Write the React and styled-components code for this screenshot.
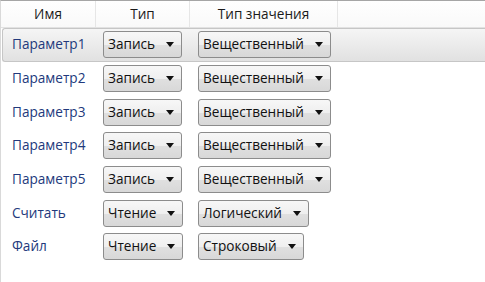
import React from 'react';
import styled, { createGlobalStyle } from 'styled-components';

const GlobalStyle = createGlobalStyle`
  html, body {
    margin: 0;
    padding: 0;
    background: #fff;
  }
  body {
    font-family: 'Open Sans', 'Liberation Sans', sans-serif;
    font-size: 13.6px;
  }
`;

const Grid = styled.div`
  box-sizing: border-box;
  width: 485px;
  height: 282px;
  border-top: 1px solid #a6a6a6;
  border-left: 1px solid #d9d9d9;
  background: #fff;
`;

const columns = '95px 94px 148px 1fr';

const HeaderRow = styled.div`
  display: grid;
  grid-template-columns: ${columns};
  height: 26px;
  border-bottom: 1px solid #e2e2e2;
  background: linear-gradient(#ffffff, #f9f9f9);
`;

const HeaderCell = styled.div`
  display: flex;
  align-items: center;
  justify-content: center;
  border-right: 1px solid #e6e6e6;
  color: #1a1a1a;
  padding-bottom: 2px;
`;

const Body = styled.div`
  display: flex;
  flex-direction: column;
`;

const Row = styled.div`
  box-sizing: border-box;
  display: grid;
  grid-template-columns: ${columns};
  align-items: center;
  height: 33.7px;
  margin-left: 1px;
  border: 1px solid ${(p) => (p.$selected ? '#c6c6c6' : 'transparent')};
  border-right: none;
  border-radius: 3px 0 0 3px;
  background: ${(p) =>
    p.$selected ? 'linear-gradient(#f5f5f5, #e1e1e1)' : 'transparent'};
`;

const Label = styled.div`
  padding-left: 9px;
  color: #22397c;
  padding-bottom: 2px;
`;

const Cell = styled.div`
  padding-left: ${(p) => p.$indent}px;
`;

const Combo = styled.div`
  box-sizing: border-box;
  display: inline-flex;
  align-items: center;
  height: 27px;
  padding: 0 7px 2px 4px;
  border: 1px solid #8c8c8c;
  border-radius: 3px;
  background: linear-gradient(#f7f7f7 0%, #efefef 50%, #e0e0e0 51%, #d8d8d8 100%);
  color: #111;
  white-space: nowrap;
`;

const Arrow = styled.span`
  margin-left: ${(p) => p.$gap}px;
  margin-top: 2px;
  width: 0;
  height: 0;
  border-left: 4px solid transparent;
  border-right: 4px solid transparent;
  border-top: 5px solid #111;
`;

const rows = [
  { name: 'Параметр1', kind: 'Запись', value: 'Вещественный', selected: true },
  { name: 'Параметр2', kind: 'Запись', value: 'Вещественный' },
  { name: 'Параметр3', kind: 'Запись', value: 'Вещественный' },
  { name: 'Параметр4', kind: 'Запись', value: 'Вещественный' },
  { name: 'Параметр5', kind: 'Запись', value: 'Вещественный' },
  { name: 'Считать', kind: 'Чтение', value: 'Логический' },
  { name: 'Файл', kind: 'Чтение', value: 'Строковый' },
];

const App = () => (
  <>
    <GlobalStyle />
    <Grid>
      <HeaderRow>
        <HeaderCell>Имя</HeaderCell>
        <HeaderCell>Тип</HeaderCell>
        <HeaderCell>Тип значения</HeaderCell>
        <div />
      </HeaderRow>
      <Body>
        {rows.map((r) => (
          <Row key={r.name} $selected={r.selected}>
            <Label>{r.name}</Label>
            <Cell $indent={5}>
              <Combo>
                {r.kind}
                <Arrow $gap={11} />
              </Combo>
            </Cell>
            <Cell $indent={6}>
              <Combo>
                {r.value}
                <Arrow $gap={11} />
              </Combo>
            </Cell>
            <div />
          </Row>
        ))}
      </Body>
    </Grid>
  </>
);

export default App;
